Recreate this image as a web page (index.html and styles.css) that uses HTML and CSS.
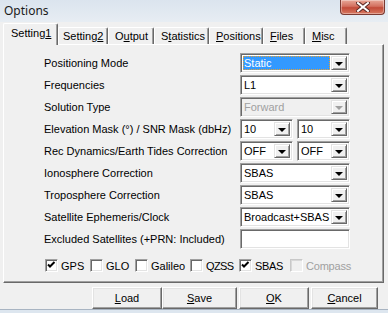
FILE: index.html
```html
<!DOCTYPE html>
<html lang="en">
<head>
  <meta charset="UTF-8" />
  <title>Options</title>
  <link rel="stylesheet" href="styles.css">
</head>
<body>

  <div class="window">
    <div class="titlebar">
      <span class="title">Options</span>
      <div class="close">
        <svg width="14" height="10" viewBox="0 0 14 10">
          <path d="M2 1 L12 9 M12 1 L2 9" stroke="#5a2a26" stroke-width="4" stroke-linecap="square" />
          <path d="M2 1 L12 9 M12 1 L2 9" stroke="#ffffff" stroke-width="2" stroke-linecap="square" />
        </svg>
      </div>
    </div>

    <div class="client">
      <div class="tabs">
        <div class="tab active tab-s1">Setting<u>1</u></div>
        <div class="tab tab-s2">Setting<u>2</u></div>
        <div class="tab tab-out">O<u>u</u>tput</div>
        <div class="tab tab-stat">S<u>t</u>atistics</div>
        <div class="tab tab-pos"><u>P</u>ositions</div>
        <div class="tab tab-files"><u>F</u>iles</div>
        <div class="tab tab-misc"><u>M</u>isc</div>
      </div>

      <div class="page">
        <div class="form">
          <div class="label">Positioning Mode</div>
          <div class="combo focus">
            <span class="value"><span class="selected">Static</span></span>
            <span class="drop"><i class="arrow"></i></span>
          </div>

          <div class="label">Frequencies</div>
          <div class="combo">
            <span class="value">L1</span>
            <span class="drop"><i class="arrow"></i></span>
          </div>

          <div class="label">Solution Type</div>
          <div class="combo disabled">
            <span class="value">Forward</span>
            <span class="drop"><i class="arrow"></i></span>
          </div>

          <div class="label">Elevation Mask (°) / SNR Mask (dbHz)</div>
          <div class="pair">
            <div class="combo">
              <span class="value">10</span>
              <span class="drop"><i class="arrow"></i></span>
            </div>
            <div class="combo">
              <span class="value">10</span>
              <span class="drop"><i class="arrow"></i></span>
            </div>
          </div>

          <div class="label">Rec Dynamics/Earth Tides Correction</div>
          <div class="pair">
            <div class="combo">
              <span class="value">OFF</span>
              <span class="drop"><i class="arrow"></i></span>
            </div>
            <div class="combo">
              <span class="value">OFF</span>
              <span class="drop"><i class="arrow"></i></span>
            </div>
          </div>

          <div class="label">Ionosphere Correction</div>
          <div class="combo">
            <span class="value">SBAS</span>
            <span class="drop"><i class="arrow"></i></span>
          </div>

          <div class="label">Troposphere Correction</div>
          <div class="combo">
            <span class="value">SBAS</span>
            <span class="drop"><i class="arrow"></i></span>
          </div>

          <div class="label">Satellite Ephemeris/Clock</div>
          <div class="combo">
            <span class="value">Broadcast+SBAS</span>
            <span class="drop"><i class="arrow"></i></span>
          </div>

          <div class="label">Excluded Satellites (+PRN: Included)</div>
          <div class="edit"></div>
        </div>

        <div class="systems">
          <div class="check w-gps"><span class="box checked"></span>GPS</div>
          <div class="check w-glo"><span class="box"></span>GLO</div>
          <div class="check w-gal"><span class="box"></span>Galileo</div>
          <div class="check w-qzss"><span class="box"></span>QZSS</div>
          <div class="check w-sbas"><span class="box checked"></span>SBAS</div>
          <div class="check disabled"><span class="box"></span>Compass</div>
        </div>
      </div>

      <div class="buttons">
        <button class="btn w-load"><u>L</u>oad</button>
        <button class="btn w-save"><u>S</u>ave</button>
        <button class="btn w-ok"><u>O</u>K</button>
        <button class="btn w-cancel"><u>C</u>ancel</button>
      </div>
    </div>
  </div>

</body>
</html>
```

FILE: styles.css
```css
html, body {
  margin: 0;
  padding: 0;
}

body {
  font-family: 'Liberation Sans', Arial, sans-serif;
  font-size: 11px;
  color: #000000;
  background: #dde6ef;
  width: 388px;
  height: 313px;
  overflow: hidden;
}

.window {
  width: 388px;
  height: 313px;
  display: flex;
  flex-direction: column;
}

/* Title bar */
.titlebar {
  height: 22px;
  flex: 0 0 22px;
  display: flex;
  align-items: flex-start;
  justify-content: space-between;
  background: linear-gradient(180deg, #dbe4ee 0%, #e7edf3 100%);
}

.title {
  font-family: 'Noto Sans', 'Open Sans', sans-serif;
  font-size: 12px;
  padding: 2px 0 0 4px;
  color: #1a1a1a;
}

.close {
  width: 45px;
  height: 15px;
  margin-right: 3px;
  border: 1px solid #7a3a32;
  border-top: none;
  border-radius: 0 0 4px 4px;
  background: linear-gradient(180deg, #e8a898 0%, #d3705f 45%, #c24a38 55%, #d87a62 100%);
  box-shadow: inset 0 0 0 1px rgba(255, 255, 255, 0.35);
  display: flex;
  align-items: center;
  justify-content: center;
  box-sizing: border-box;
}

/* Client area */
.client {
  flex: 1;
  background: #f0f0f0;
  margin: 0 0 3px 0;
  padding: 1px 4px 0 3px;
  border-bottom: 1px solid #a8b4c2;
  display: flex;
  flex-direction: column;
}

.tabs {
  display: flex;
  align-items: flex-end;
  height: 21px;
  position: relative;
  z-index: 2;
}

.tab {
  height: 17px;
  flex: 0 0 auto;
  box-sizing: border-box;
  padding: 2px 0 0 6px;
  background: #f0f0f0;
  border-left: 1px solid #ffffff;
  border-top: 1px solid #ffffff;
  border-right: 1px solid #696969;
  box-shadow: inset -1px 0 0 #a0a0a0;
  border-radius: 2px 2px 0 0;
  white-space: nowrap;
  line-height: 13px;
}

.tab.active {
  height: 22px;
  margin-bottom: -1px;
  padding: 3px 0 0 7px;
}

.tab-s1 { width: 55px; }
.tab-s2 { width: 50px; padding-left: 4px; }
.tab-out { width: 46px; }
.tab-stat { width: 55px; }
.tab-pos { width: 54px; }
.tab-files { width: 42px; }
.tab-misc { width: 42px; }

/* Tab page */
.page {
  height: 239px;
  box-sizing: border-box;
  background: #f0f0f0;
  border: 1px solid;
  border-color: #ffffff #696969 #696969 #ffffff;
  box-shadow: inset -1px -1px 0 #a0a0a0;
  padding: 8px 0 0 40px;
}

.form {
  display: grid;
  grid-template-columns: 196px 110px;
  grid-auto-rows: 20px;
  row-gap: 2px;
}

.label {
  display: flex;
  align-items: center;
  white-space: nowrap;
}

.combo {
  display: flex;
  height: 20px;
  box-sizing: border-box;
  background: #ffffff;
  border: 1px solid;
  border-color: #a0a0a0 #ffffff #ffffff #a0a0a0;
  box-shadow: inset 1px 1px 0 #696969, inset -1px -1px 0 #e3e3e3;
  padding: 2px;
}

.combo .value {
  flex: 1;
  display: flex;
  align-items: center;
  padding-left: 1px;
  white-space: nowrap;
  overflow: hidden;
}

.combo.focus .value {
  padding: 0;
  margin-right: 1px;
}

.selected {
  display: flex;
  align-items: center;
  width: 100%;
  height: 100%;
  box-sizing: border-box;
  padding-left: 1px;
  background: #3399ff;
  color: #ffffff;
  outline: 1px dotted #e8a030;
  outline-offset: -1px;
}

.drop {
  width: 16px;
  flex: 0 0 16px;
  box-sizing: border-box;
  background: #f0f0f0;
  border: 1px solid;
  border-color: #e3e3e3 #696969 #696969 #e3e3e3;
  box-shadow: inset 1px 1px 0 #ffffff, inset -1px -1px 0 #a0a0a0;
  display: flex;
  align-items: center;
  justify-content: center;
}

.arrow {
  width: 0;
  height: 0;
  margin-top: 1px;
  border-left: 4px solid transparent;
  border-right: 4px solid transparent;
  border-top: 4px solid #000000;
}

.combo.disabled {
  background: #f0f0f0;
}

.combo.disabled .value {
  color: #a0a0a0;
}

.combo.disabled .arrow {
  border-top-color: #a0a0a0;
}

.pair {
  display: flex;
  justify-content: space-between;
}

.pair .combo {
  width: 53px;
}

.edit {
  height: 20px;
  box-sizing: border-box;
  background: #ffffff;
  border: 1px solid;
  border-color: #a0a0a0 #ffffff #ffffff #a0a0a0;
  box-shadow: inset 1px 1px 0 #696969, inset -1px -1px 0 #e3e3e3;
}

/* Navigation systems */
.systems {
  display: flex;
  align-items: center;
  margin-top: 10px;
  padding-left: 1px;
  height: 13px;
}

.check {
  display: flex;
  flex: 0 0 auto;
  align-items: center;
  gap: 3px;
  white-space: nowrap;
}

.w-gps { width: 45px; }
.w-glo { width: 45px; }
.w-gal { width: 55px; }
.w-qzss { width: 49px; letter-spacing: -0.6px; }
.w-sbas { width: 51px; letter-spacing: -0.3px; }

.box {
  width: 13px;
  height: 13px;
  flex: 0 0 13px;
  box-sizing: border-box;
  background: #ffffff;
  border: 1px solid;
  border-color: #a0a0a0 #ffffff #ffffff #a0a0a0;
  box-shadow: inset 1px 1px 0 #696969, inset -1px -1px 0 #e3e3e3;
}

.box.checked {
  background: #ffffff url("data:image/svg+xml;utf8,<svg xmlns='http://www.w3.org/2000/svg' width='11' height='11'><path d='M2 4.5 L4 6.5 L8.5 2' fill='none' stroke='black' stroke-width='2'/></svg>") no-repeat 0 0;
}

.check.disabled {
  color: #a0a0a0;
  letter-spacing: -0.2px;
}

.check.disabled .box {
  background: #f0f0f0;
  border-color: #c8c8c8 #ffffff #ffffff #c8c8c8;
  box-shadow: inset 1px 1px 0 #d8d8d8;
}

/* Bottom buttons */
.buttons {
  display: flex;
  padding: 4px 0 0 89px;
}

.btn {
  height: 22px;
  flex: 0 0 auto;
  font-family: inherit;
  font-size: 11px;
  color: #000000;
  background: #f0f0f0;
  border: 1px solid;
  border-color: #ffffff #696969 #696969 #ffffff;
  box-shadow: inset -1px -1px 0 #a0a0a0, inset 1px 1px 0 #e3e3e3;
  padding: 0;
  margin-right: 2px;
}

.w-load { width: 70px; margin-right: 0; }
.w-save { width: 75px; }
.w-ok { width: 70px; }
.w-cancel { width: 67px; }
```
